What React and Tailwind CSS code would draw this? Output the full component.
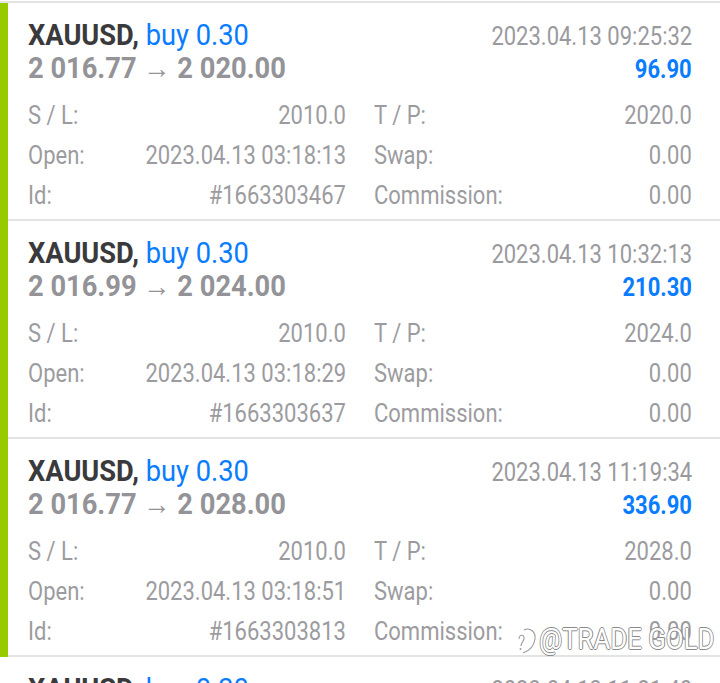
const trades = [
  {
    lots: '0.30',
    open: '2 016.77',
    close: '2 020.00',
    time: '2023.04.13 09:25:32',
    profit: '96.90',
    sl: '2010.0',
    tp: '2020.0',
    opened: '2023.04.13 03:18:13',
    swap: '0.00',
    id: '#1663303467',
    commission: '0.00',
    active: true,
  },
  {
    lots: '0.30',
    open: '2 016.99',
    close: '2 024.00',
    time: '2023.04.13 10:32:13',
    profit: '210.30',
    sl: '2010.0',
    tp: '2024.0',
    opened: '2023.04.13 03:18:29',
    swap: '0.00',
    id: '#1663303637',
    commission: '0.00',
    active: true,
  },
  {
    lots: '0.30',
    open: '2 016.77',
    close: '2 028.00',
    time: '2023.04.13 11:19:34',
    profit: '336.90',
    sl: '2010.0',
    tp: '2028.0',
    opened: '2023.04.13 03:18:51',
    swap: '0.00',
    id: '#1663303813',
    commission: '0.00',
    active: true,
  },
  {
    lots: '0.30',
    open: '2 016.77',
    close: '2 032.00',
    time: '2023.04.13 11:21:40',
    profit: '420.90',
    sl: '2010.0',
    tp: '2032.0',
    opened: '2023.04.13 03:19:02',
    swap: '0.00',
    id: '#1663303901',
    commission: '0.00',
    active: false,
  },
];

// narrow text, like the condensed face in the app
function L({ children, className = 'scale-x-[0.88]' }) {
  return <span className={`inline-block origin-left whitespace-nowrap ${className}`}>{children}</span>;
}

function R({ children, className = '' }) {
  return <span className={`inline-block origin-right scale-x-[0.88] whitespace-nowrap ${className}`}>{children}</span>;
}

function Field({ label, value }) {
  return (
    <div className="flex justify-between items-baseline h-[40px] leading-[40px]">
      <L>{label}</L>
      <R>{value}</R>
    </div>
  );
}

function TradeCard({ t }) {
  return (
    <div className="flex">
      <div className={t.active ? 'w-[8px] shrink-0 bg-[#97cb00]' : 'w-[8px] shrink-0 bg-white'} />
      <div className="flex-1 border-b-2 border-[#e3e3e3] pl-[20px] pr-[28px] pt-[16px] pb-[3px]">
        <div className="flex justify-between items-baseline h-[33px] leading-[33px]">
          <L className="scale-x-[0.94] text-[29px]">
            <span className="font-bold text-[#3a3a3d]">XAUUSD,</span>{' '}
            <span className="text-[#0a7cff]">buy {t.lots}</span>
          </L>
          <R className="text-[25px] text-[#9a9a9e]">{t.time}</R>
        </div>
        <div className="flex justify-between items-baseline h-[33px] leading-[33px]">
          <L className="scale-x-[0.94] text-[29px] font-bold text-[#939398]">
            {t.open} → {t.close}
          </L>
          <R className="text-[25px] font-bold text-[#0a7cff]">{t.profit}</R>
        </div>
        <div className="grid grid-cols-2 gap-x-[28px] mt-[11px] text-[25px] text-[#9c9ca0]">
          <Field label="S / L:" value={t.sl} />
          <Field label="T / P:" value={t.tp} />
          <Field label="Open:" value={t.opened} />
          <Field label="Swap:" value={t.swap} />
          <Field label="Id:" value={t.id} />
          <Field label="Commission:" value={t.commission} />
        </div>
      </div>
    </div>
  );
}

export default function App() {
  return (
    <div className="relative w-[720px] h-[683px] overflow-hidden bg-white font-['Roboto',sans-serif]">
      <div className="h-[1px]" />
      <div className="border-t-2 border-[#e3e3e3]">
        {trades.map((t) => (
          <TradeCard key={t.id} t={t} />
        ))}
      </div>

      {/* watermark */}
      <div className="absolute left-[515px] top-[622px] flex items-center gap-[2px]">
        <svg width="22" height="34" viewBox="0 0 22 34" fill="none">
          <path
            d="M9 8 C15 5 21 10 20 17 C19 24 14 29 8 31"
            stroke="#9a9a9a"
            strokeWidth="1.1"
          />
          <path
            d="M4 17 C4 12 10 12 9 17 C8 20 6 21 6 24"
            stroke="#9a9a9a"
            strokeWidth="1.1"
          />
          <circle cx="5.5" cy="27" r="0.9" fill="#9a9a9a" />
        </svg>
        <span className="inline-block origin-left scale-x-[0.86] whitespace-nowrap text-[30px] leading-[34px] text-white [text-shadow:1px_0_#8a8a8a,-1px_0_#8a8a8a,0_1px_#8a8a8a,0_-1px_#8a8a8a]">
          @TRADE GOLD
        </span>
      </div>
    </div>
  );
}
